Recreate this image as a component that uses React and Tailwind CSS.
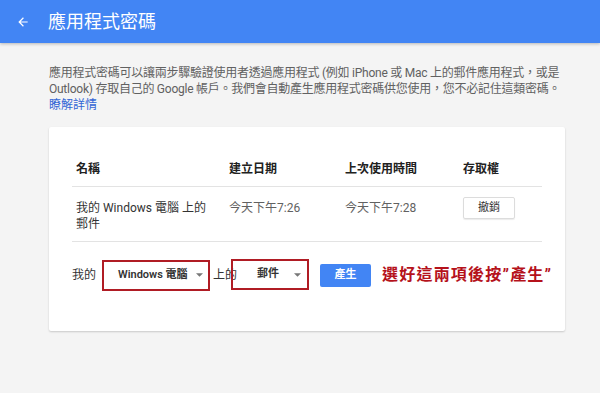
const font = { fontFamily: '"Roboto", "Liberation Sans", "Noto Sans CJK TC", sans-serif' }

const Caret = () => (
  <svg width="7" height="4" viewBox="0 0 8 4" className="shrink-0">
    <path d="M0 0 L8 0 L4 4 Z" fill="#777" />
  </svg>
)

export default function App() {
  return (
    <div className="w-[600px] h-[393px] bg-[#f4f4f4] overflow-hidden text-[#212121]" style={font}>
      <div className="h-[43px] bg-[#4285f4] flex items-center shadow-[0_1px_3px_rgba(0,0,0,0.25)]">
        <svg width="14" height="14" viewBox="0 0 24 24" className="ml-[16px]">
          <path d="M20 11H7.83l5.59-5.59L12 4l-8 8 8 8 1.41-1.41L7.83 13H20v-2z" fill="#fff" />
        </svg>
        <div className="ml-[18px] text-white text-[18px] leading-none">應用程式密碼</div>
      </div>

      <div className="pl-[49px] pt-[22px]">
        <p className="text-[12px] leading-[16px] text-[#616161] whitespace-nowrap tracking-[-0.25px]">
          應用程式密碼可以讓兩步驟驗證使用者透過應用程式 (例如 iPhone 或 Mac 上的郵件應用程式，或是
          <br />
          Outlook) 存取自己的 Google 帳戶。我們會自動產生應用程式密碼供您使用，您不必記住這類密碼。
        </p>
        <a className="block text-[12px] leading-[16px] text-[#3367d6]">瞭解詳情</a>

        <div className="mt-[14px] w-[516px] h-[204px] bg-white rounded-[2px] shadow-[0_1px_2px_rgba(0,0,0,0.18)] pl-[23px] pr-[23px] pt-[33px]">
          <div className="grid grid-cols-[153px_116px_118px_83px] text-[12px] font-bold text-[#212121] h-[27px] border-b border-[#e3e3e3]">
            <div className="pl-1">名稱</div>
            <div className="pl-1">建立日期</div>
            <div className="pl-1">上次使用時間</div>
            <div className="pl-1">存取權</div>
          </div>
          <div className="grid grid-cols-[153px_116px_118px_83px] items-start text-[12px] leading-[16px] h-[55px] border-b border-[#e3e3e3]">
            <div className="pl-1 pt-[13px] pr-2 text-[#333]">我的 Windows 電腦 上的 郵件</div>
            <div className="pl-1 pt-[13px] text-[#616161]">今天下午7:26</div>
            <div className="pl-1 pt-[13px] text-[#616161]">今天下午7:28</div>
            <div className="pl-1 pt-[10px]">
              <div className="w-[52px] h-[22px] border border-[#dcdcdc] rounded-[2px] shadow-[0_1px_1px_rgba(0,0,0,0.08)] flex items-center justify-center text-[11px] text-[#333]">撤銷</div>
            </div>
          </div>
          <div className="flex items-center h-[64px] text-[12px] pt-[2px] whitespace-nowrap">
            <span className="text-[#333] shrink-0">我的</span>
            <div className="ml-[6px] shrink-0 w-[108px] h-[31px] border-2 border-[#b01c24] flex items-center pl-[14px]">
              <span className="text-[11px] font-semibold text-[#333]">Windows 電腦</span>
              <span className="w-[8px] shrink-0" />
              <Caret />
            </div>
            <span className="ml-[3px] text-[#333] shrink-0">上的</span>
            <div className="-ml-[6px] shrink-0 w-[78px] h-[31px] -mt-[1px] border-2 border-[#b01c24] flex items-center pl-[24px]">
              <span className="text-[11px] font-semibold text-[#333]">郵件</span>
              <span className="w-[15px] shrink-0" />
              <Caret />
            </div>
            <div className="ml-[11px] shrink-0 w-[51px] h-[23px] bg-[#4285f4] rounded-[2px] flex items-center justify-center text-white text-[11px] font-bold">產生</div>
            <div className="ml-[11px] shrink-0 text-[16px] font-bold text-[#b5121b] tracking-[1.2px]">選好這兩項後按”產生”</div>
          </div>
        </div>
      </div>
    </div>
  )
}
